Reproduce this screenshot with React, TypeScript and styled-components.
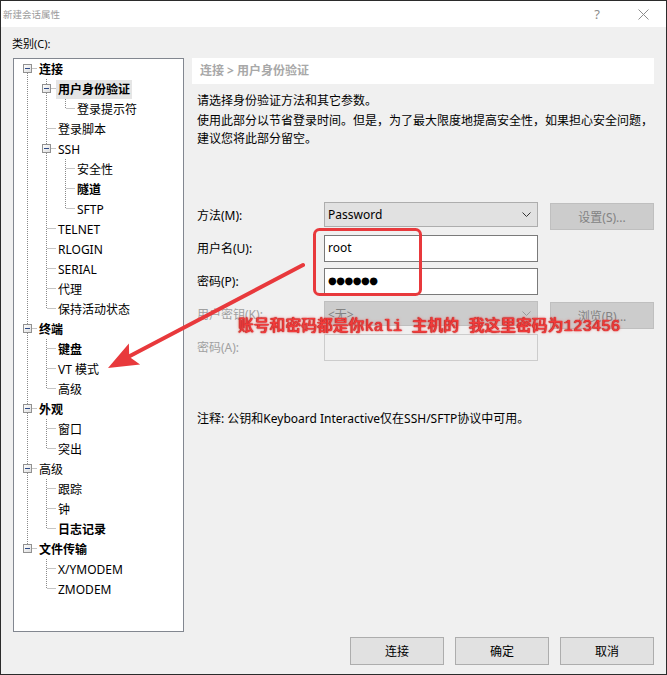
import React from 'react';
import styled, { createGlobalStyle } from 'styled-components';

const GlobalStyle = createGlobalStyle`
  html, body { margin: 0; padding: 0; background: #f0f0f0; }
  body {
    font-family: "Noto Sans", "Noto Sans CJK SC", sans-serif;
    font-size: 12px;
    color: #000;
  }
  * { box-sizing: border-box; }
`;

const Window = styled.div`
  position: relative;
  width: 667px;
  height: 675px;
  border: 1px solid #2b2b2b;
  background: #f0f0f0;
  display: flex;
  flex-direction: column;
  overflow: hidden;
`;

const TitleBar = styled.div`
  height: 26px;
  flex: none;
  background: #fff;
  display: flex;
  align-items: center;
`;

const Title = styled.div`
  flex: 1;
  padding-left: 2px;
  font-size: 9.5px;
  color: #9b9b9b;
  font-family: "Noto Sans CJK SC", sans-serif;
`;

const CaptionButton = styled.div`
  width: 46px;
  height: 26px;
  display: flex;
  align-items: center;
  justify-content: center;
  color: #8c8c8c;
  font-size: 13px;
  font-family: "Noto Sans", sans-serif;
`;

const Main = styled.div`
  flex: 1;
  padding: 9px 12px 0 12px;
  display: flex;
  flex-direction: column;
`;

const CategoryLabel = styled.div`
  height: 16px;
  line-height: 16px;
  margin-left: -1px;
  margin-bottom: 6px;
  font-size: 11px;
`;

const Columns = styled.div`
  display: grid;
  grid-template-columns: 171px 462px;
  column-gap: 8px;
  height: 574px;
`;

const TreeBox = styled.div`
  border: 1px solid #828790;
  background: #fff;
`;

const TreeRow = styled.div`
  display: flex;
  align-items: center;
  height: 20px;
`;

const Gutter = styled.svg`
  flex: none;
  display: block;
`;

const TreeLabel = styled.span<{ $bold?: boolean; $sel?: boolean }>`
  padding: 0 2px;
  height: 19px;
  line-height: 19px;
  white-space: nowrap;
  font-weight: ${p => (p.$bold ? 700 : 400)};
  background: ${p => (p.$sel ? '#e5e5e5' : 'transparent')};
`;

const Panel = styled.div`
  display: flex;
  flex-direction: column;
`;

const HeaderBar = styled.div`
  height: 26px;
  line-height: 26px;
  background: #fff;
  padding-left: 8px;
  color: #a8a8a8;
  font-weight: 700;
`;

const Desc = styled.div`
  margin: 8px 0 0 5px;
`;

const DescText = styled.p`
  margin: 0 0 2px;
  line-height: 18px;
  white-space: nowrap;
`;

const Form = styled.div`
  margin: 52px 0 0 5px;
  display: flex;
  flex-direction: column;
  gap: 6px;
`;

const FormRow = styled.div`
  display: flex;
  align-items: flex-start;
  height: 27px;
`;

const FieldLabel = styled.div<{ $disabled?: boolean }>`
  width: 127px;
  height: 27px;
  line-height: 27px;
  color: ${p => (p.$disabled ? '#a0a0a0' : '#000')};
`;

const Combo = styled.div<{ $disabled?: boolean }>`
  width: 214px;
  height: 25px;
  display: flex;
  align-items: center;
  justify-content: space-between;
  padding: 0 6px 0 3px;
  background: ${p => (p.$disabled ? '#cccccc' : '#e1e1e1')};
  border: 1px solid ${p => (p.$disabled ? '#bfbfbf' : '#adadad')};
  color: ${p => (p.$disabled ? '#838383' : '#000')};
`;

const TextBox = styled.input<{ $disabled?: boolean; $dots?: boolean }>`
  width: 214px;
  height: 27px;
  margin: 0;
  padding: 0 3px 2px;
  outline: none;
  background: ${p => (p.$disabled ? '#f0f0f0' : '#fff')};
  border: 1px solid ${p => (p.$disabled ? '#cccccc' : '#7a7a7a')};
  font-family: ${p => (p.$dots ? '"DejaVu Sans", sans-serif' : '"Noto Sans", "Noto Sans CJK SC", sans-serif')};
  font-size: ${p => (p.$dots ? '10px' : '12px')};
  letter-spacing: ${p => (p.$dots ? '-0.5px' : '0')};
  color: #000;
`;

const SideButton = styled.div<{ $disabled?: boolean }>`
  margin: 1px 0 0 12px;
  width: 104px;
  height: 27px;
  display: flex;
  align-items: center;
  justify-content: center;
  background: #cccccc;
  border: 1px solid #bfbfbf;
  color: #838383;
`;

const Note = styled.div`
  margin: 50px 0 0 5px;
  line-height: 16px;
`;

const Footer = styled.div`
  flex: none;
  padding: 5px 12px 9px;
  display: flex;
  justify-content: flex-end;
  gap: 11px;
`;

const DialogButton = styled.div`
  width: 94px;
  height: 28px;
  display: flex;
  align-items: center;
  justify-content: center;
  background: #e1e1e1;
  border: 1px solid #adadad;
`;

const Overlay = styled.svg`
  position: absolute;
  left: -1px;
  top: -1px;
  pointer-events: none;
`;

const AnnotationText = styled.div`
  position: absolute;
  left: 237px;
  top: 316px;
  line-height: 20px;
  font-size: 15.8px;
  font-weight: 500;
  white-space: pre;
  font-family: "Liberation Mono", "Noto Sans CJK SC", monospace;
  color: #f23b3b;
  text-shadow: 0 0 1px #a81616, 0 0 1px #a81616, 0 0 3px rgba(255, 110, 110, 0.9);
`;

type Node = { t: string; b?: boolean; sel?: boolean; children?: Node[] };

const tree: Node[] = [
  {
    t: '连接', b: true, children: [
      { t: '用户身份验证', b: true, sel: true, children: [{ t: '登录提示符' }] },
      { t: '登录脚本' },
      { t: 'SSH', children: [{ t: '安全性' }, { t: '隧道', b: true }, { t: 'SFTP' }] },
      { t: 'TELNET' },
      { t: 'RLOGIN' },
      { t: 'SERIAL' },
      { t: '代理' },
      { t: '保持活动状态' },
    ],
  },
  { t: '终端', b: true, children: [{ t: '键盘', b: true }, { t: 'VT 模式' }, { t: '高级' }] },
  { t: '外观', b: true, children: [{ t: '窗口' }, { t: '突出' }] },
  { t: '高级', children: [{ t: '跟踪' }, { t: '钟' }, { t: '日志记录', b: true }] },
  { t: '文件传输', b: true, children: [{ t: 'X/YMODEM' }, { t: 'ZMODEM' }] },
];

type Flat = {
  node: Node;
  level: number;
  last: boolean;
  firstRoot: boolean;
  cont: boolean[];
};

function flatten(nodes: Node[], level: number, cont: boolean[], out: Flat[]) {
  nodes.forEach((n, i) => {
    const last = i === nodes.length - 1;
    out.push({ node: n, level, last, firstRoot: level === 0 && i === 0, cont });
    if (n.children) flatten(n.children, level + 1, [...cont, !last], out);
  });
  return out;
}

const rows = flatten(tree, 0, [], []);
const LINE = '#8a8a8a';

function RowGutter({ r }: { r: Flat }) {
  const w = 8 + 19 * r.level + 15;
  const lines: React.ReactNode[] = [];
  r.cont.forEach((c, k) => {
    if (c) {
      const x = 8 + 19 * k + 5.5;
      lines.push(<line key={'v' + k} x1={x} y1={0} x2={x} y2={20} stroke={LINE} strokeDasharray="1 1" />);
    }
  });
  const x0 = 8 + 19 * r.level + 5.5;
  lines.push(
    <line key="own" x1={x0} y1={r.firstRoot ? 10 : 0} x2={x0} y2={r.last ? 10 : 20} stroke={LINE} strokeDasharray="1 1" />
  );
  lines.push(<line key="h" x1={x0 + 1} y1={9.5} x2={w} y2={9.5} stroke={LINE} strokeDasharray="1 1" />);
  const hasKids = !!r.node.children;
  return (
    <Gutter width={w} height={20} viewBox={`0 0 ${w} 20`}>
      {lines}
      {hasKids && (
        <g>
          <defs>
            <linearGradient id="exp" x1="0" y1="0" x2="1" y2="1">
              <stop offset="0" stopColor="#ffffff" />
              <stop offset="1" stopColor="#dcdcdc" />
            </linearGradient>
          </defs>
          <rect x={x0 - 4} y={5.5} width={8} height={8} fill="url(#exp)" stroke="#919191" />
          <line x1={x0 - 2.5} y1={9.5} x2={x0 + 2.5} y2={9.5} stroke="#2d4a86" />
        </g>
      )}
    </Gutter>
  );
}

function Chevron({ color }: { color: string }) {
  return (
    <svg width="9" height="6" viewBox="0 0 9 6">
      <polyline points="0.5,0.5 4.5,4.5 8.5,0.5" fill="none" stroke={color} strokeWidth="1" />
    </svg>
  );
}

export default function App() {
  return (
    <>
      <GlobalStyle />
      <Window>
        <TitleBar>
          <Title>新建会话属性</Title>
          <CaptionButton>?</CaptionButton>
          <CaptionButton>
            <svg width="11" height="11" viewBox="0 0 11 11">
              <line x1="0.5" y1="0.5" x2="10.5" y2="10.5" stroke="#8c8c8c" />
              <line x1="10.5" y1="0.5" x2="0.5" y2="10.5" stroke="#8c8c8c" />
            </svg>
          </CaptionButton>
        </TitleBar>
        <Main>
          <CategoryLabel>类别(C):</CategoryLabel>
          <Columns>
            <TreeBox>
              {rows.map((r, i) => (
                <TreeRow key={i}>
                  <RowGutter r={r} />
                  <TreeLabel $bold={r.node.b} $sel={r.node.sel}>{r.node.t}</TreeLabel>
                </TreeRow>
              ))}
            </TreeBox>
            <Panel>
              <HeaderBar>连接 &gt; 用户身份验证</HeaderBar>
              <Desc>
                <DescText>请选择身份验证方法和其它参数。</DescText>
                <DescText>
                  使用此部分以节省登录时间。但是，为了最大限度地提高安全性，如果担心安全问题，
                  <br />
                  建议您将此部分留空。
                </DescText>
              </Desc>
              <Form>
                <FormRow>
                  <FieldLabel>方法(M):</FieldLabel>
                  <Combo>
                    <span>Password</span>
                    <Chevron color="#333" />
                  </Combo>
                  <SideButton $disabled>设置(S)...</SideButton>
                </FormRow>
                <FormRow>
                  <FieldLabel>用户名(U):</FieldLabel>
                  <TextBox readOnly value="root" />
                </FormRow>
                <FormRow>
                  <FieldLabel>密码(P):</FieldLabel>
                  <TextBox readOnly $dots value="●●●●●●" />
                </FormRow>
                <FormRow>
                  <FieldLabel $disabled>用户密钥(K):</FieldLabel>
                  <Combo $disabled>
                    <span>&lt;无&gt;</span>
                    <Chevron color="#9a9a9a" />
                  </Combo>
                  <SideButton $disabled>浏览(B)...</SideButton>
                </FormRow>
                <FormRow>
                  <FieldLabel $disabled>密码(A):</FieldLabel>
                  <TextBox readOnly $disabled value="" />
                </FormRow>
              </Form>
              <Note>注释: 公钥和Keyboard Interactive仅在SSH/SFTP协议中可用。</Note>
            </Panel>
          </Columns>
        </Main>
        <Footer>
          <DialogButton>连接</DialogButton>
          <DialogButton>确定</DialogButton>
          <DialogButton>取消</DialogButton>
        </Footer>
        <Overlay width={667} height={675} viewBox="0 0 667 675">
          <rect x={314.5} y={229.5} width={106} height={65} rx={5} fill="none" stroke="#e8393c" strokeWidth={3} />
          <line x1={303} y1={265} x2={128} y2={357} stroke="#e8393c" strokeWidth={4} strokeLinecap="round" />
          <polygon points="108,368 128.9,343.4 129.2,356.8 140.1,364.6" fill="#e8393c" />
        </Overlay>
        <AnnotationText>账号和密码都是你kali 主机的 我这里密码为123456</AnnotationText>
      </Window>
    </>
  );
}
